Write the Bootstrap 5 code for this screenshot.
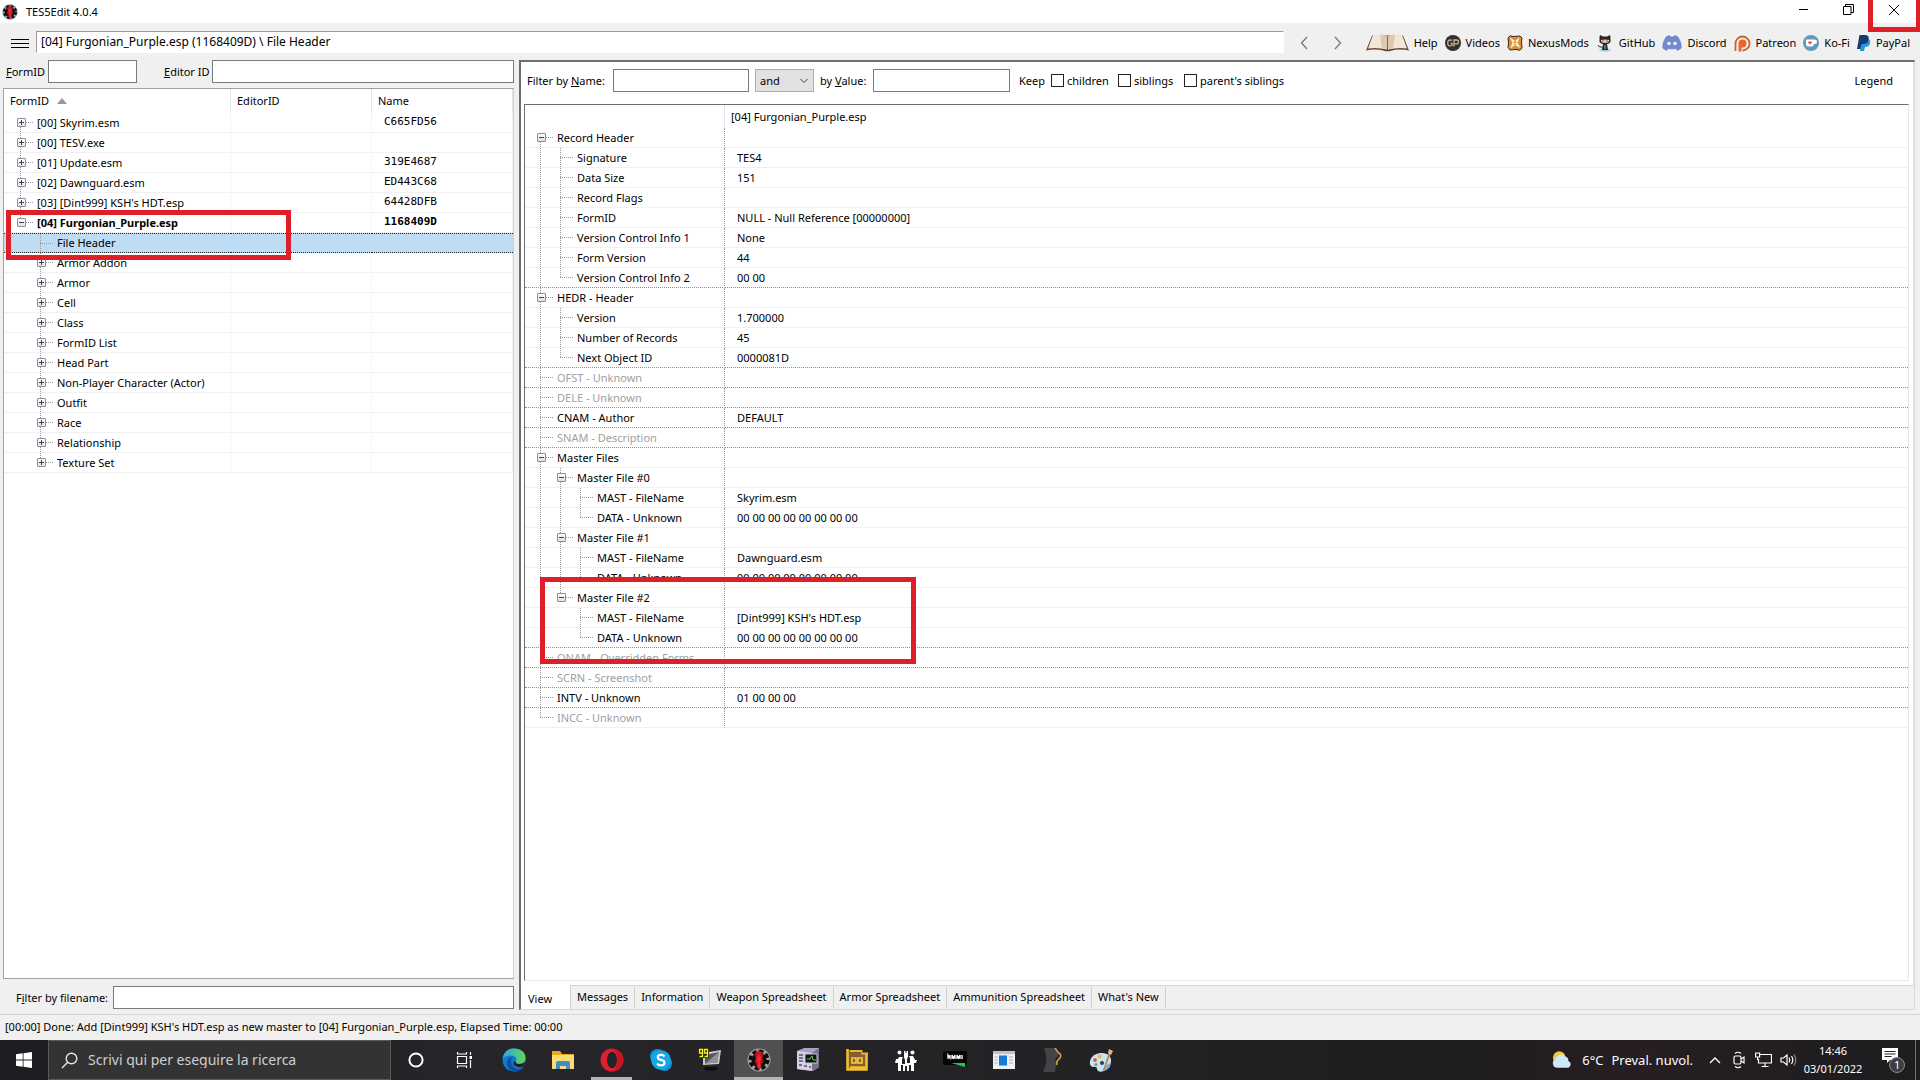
<!DOCTYPE html>
<html lang="en">
<head>
<meta charset="utf-8">
<meta name="viewport" content="width=device-width, initial-scale=1">
<title>TES5Edit 4.0.4</title>
<link href="https://cdn.jsdelivr.net/npm/bootstrap@5.3.0/dist/css/bootstrap.min.css" rel="stylesheet">
<style>
:root{--ui:"Noto Sans","Open Sans",sans-serif;--edge:#7a7a7a;--dots:#9a9a9a;--mark-red:#df1f28}
body{font-family:var(--ui);font-size:11px;line-height:16px;color:#000;background:#f0f0f0;overflow:hidden}
svg{display:block;flex:none}
label{white-space:nowrap}
button{font:inherit;color:inherit;background:none;border:0;padding:0}
a.tool-link{color:#000;text-decoration:none;gap:5px}
.title-bar{height:23px;background:#fff;padding-left:2px}
.win-btn{width:45px;height:18px;display:flex;align-items:center;justify-content:center}
.callout{position:absolute;border:5px solid var(--mark-red);pointer-events:none;z-index:5}
.tool-bar{height:37px;padding:0 10px 0 11px}
.menu-btn{padding:12px 0 8px}
.address{height:22px;background:#fff;border:1px solid #fff;border-top-color:#9a9a9a;border-left-color:#9a9a9a;padding:0 4px;font-size:12px;margin:0 3px 0 7px;min-width:0;color:#000}
.nav-arrow{width:34px;height:30px;display:flex;align-items:center;justify-content:center;padding-top:2px}
.tool-links{gap:7px;margin-left:11px;padding-top:3px}
.box-input{height:23px;border:1px solid var(--edge);background:#fff;border-radius:0;padding:0 4px;font:inherit;min-width:0}
.left-pane{width:519px;flex:none;padding:0 5px 5px 3px}
.tree-frame{background:#fff;border:1px solid #a0a0a0;border-right-color:#d0d0d0;margin:5px 0 7px;min-height:0}
.view-pane{border:2px solid #6d6d6d;border-right:1px solid #d9d9d9;border-bottom:1px solid #d9d9d9;margin:0 5px 4px 0;min-width:0}
.view-body{background:#fff;min-height:0;padding:7px 4px 4px 3px;border-bottom:1px solid #d4d4d4;border-right:1px solid #e4e4e4}
.grid-frame{border:1px solid #e8e8e8;border-left-color:#6d6d6d;border-top-color:#6d6d6d;margin-top:12px;min-height:0}
.mode-select{height:23px;width:59px;background:#e1e1e1 url("data:image/svg+xml,%3Csvg xmlns='http://www.w3.org/2000/svg' width='8' height='6'%3E%3Cpath d='M.5 1 4 4.500 7.500 1' fill='none' stroke='%23444'/%3E%3C/svg%3E") no-repeat right 5px center;border:1px solid #adadad;appearance:none;padding:0 4px;font:inherit;margin:0 6px;color:#000}
.tick{appearance:none;width:13px;height:13px;border:1px solid #222;background:#fff;margin:0 3px 0 0}
.tick:checked{background:#0067c0}

/* Tree tables */
.tree{table-layout:fixed;width:100%;border-collapse:separate;border-spacing:0}
.tree th{font-weight:400;padding:0;vertical-align:middle;border-right:1px solid #e2e6ea}
.tree td{height:20px;padding:0;border-bottom:1px solid #f1f1f1;white-space:nowrap;overflow:hidden;line-height:19px;vertical-align:top}
.tree td:first-child>div{display:flex;height:19px}
.files th{height:24px;padding-left:6px}
.files td:first-child>div{padding-left:13px}
.files td{border-right:1px solid #f4f4f4}
.files td:nth-child(3){padding-left:12px;font-family:"DejaVu Sans Mono",monospace;line-height:18px}
.files tr.chosen td{background:#bfdcf5;border-top:1px dotted #222;border-bottom:1px dotted #222;border-right:0;line-height:17px}
.files tr.chosen td>div,.files .chosen .gd{height:18px}
.record th{height:23px}
.record td:first-child>div{padding-left:12px}
.record th:last-child,.record td:last-child{border-right:0}
.record td:first-child{border-right:1px dotted var(--dots)}
.record td:last-child{padding-left:12px}
.record .part td{border-bottom:1px dotted #8e8e8e}
.record .unset{color:#a0a0a0}
/* Guide cells: gt = tee, ge = end of branch, gv = pass through, gf = first */
.gd{width:20px;height:20px;flex:none;position:relative;
 --h:repeating-linear-gradient(90deg,var(--dots) 0 1px,transparent 1px 2px) 3px 9px/13px 1px no-repeat;
 --v:repeating-linear-gradient(var(--dots) 0 1px,transparent 1px 2px)}
.gt{background:var(--h),var(--v) 3px 0/1px 20px no-repeat}
.ge{background:var(--h),var(--v) 3px 0/1px 10px no-repeat}
.gf{background:var(--h),var(--v) 3px 10px/1px 10px no-repeat}
.gv{background:var(--v) 3px 0/1px 20px no-repeat}
.pm{position:absolute;left:0;top:5px;width:9px;height:9px;border:1px solid #8b8f9a;border-radius:1px;
 background:linear-gradient(#33415e,#33415e) 1px 3px/5px 1px no-repeat,linear-gradient(#33415e,#33415e) 3px 1px/1px 5px no-repeat,linear-gradient(#fff,#e4e4ea)}
.pm.open{background:linear-gradient(#33415e,#33415e) 1px 3px/5px 1px no-repeat,linear-gradient(#fff,#e0e0e4)}

.page-tabs{height:23px}
.page-tabs button{height:21px;padding:0 6px 2px;border-right:1px solid #d0d0d0;align-self:flex-start;margin-top:1px}
.page-tabs button.on{background:#fff;height:24px;margin:-1px 0 0;width:50px;padding:3px 0 0 7px;text-align:left}
.state-line{height:26px;border-top:1px solid #d4d4d4;padding:0 5px 2px}

.task-bar{height:40px;background:linear-gradient(90deg,#1e1e22,#26262a 25%,#222225 60%,#1d1c1e 75%,#261e23 85%,#1d1d1f);color:#fff;font-size:14px}
.task-cell{width:49px;height:40px;display:flex;align-items:center;justify-content:center;flex:none}
.start-cell{width:48px}
.task-search{width:343px;height:40px;background:#333;border:1px solid #5a5a5a;gap:10px;padding-left:12px}
.task-search input{background:none;border:0;outline:0;color:#fff;width:250px;font:inherit;padding:0}
.task-search input::placeholder{color:#cfcfcf;opacity:1}
.live{background:#505053;box-shadow:inset 0 -3px #b4b4b6}
.running{position:relative}
.running::after{content:"";position:absolute;left:4px;right:4px;bottom:0;height:3px;background:#b4b4b6}
.tray-text{font-size:13px}
.clock{font-size:11px;line-height:18px;width:72px}
.tray-icon{margin-right:10px}
</style>
<script src="https://cdn.jsdelivr.net/npm/bootstrap@5.3.0/dist/js/bootstrap.bundle.min.js"></script>
</head>
<body class="d-flex flex-column vh-100">
<svg width="0" height="0" class="position-absolute">
 <symbol id="gear" viewBox="0 0 24 24"><circle cx="12" cy="12" r="11.500" fill="#98a1a2"/><circle cx="12" cy="12" r="8.800" fill="none" stroke="#0c0c0c" stroke-width="3.400" stroke-dasharray="4.200 2.710"/><circle cx="12" cy="12" r="7.600" fill="#101010"/><path d="M12 1l1.500 3L15 3l.7 4-.7 3 1.500 3-1.500 2-1 4-2 3.500L10 19l-1-4-1.500-2L9 10l-.7-3L9 3l1.500 1z" fill="#c2141f"/><path d="M7.500 6l2 4-1.500 5M16.500 6l-2 4 1.500 5" fill="none" stroke="#a30f18" stroke-width="1.300"/><path d="M12 5l1 4 1.500-2-.3 5-1.400 2 .7 4L12 21l-1.500-3 .7-4-1.400-2-.3-5L11 9z" fill="#f0283a"/></symbol>
</svg>

<header class="title-bar d-flex align-items-center position-relative flex-shrink-0">
 <svg width="16" height="16"><use href="#gear"/></svg>
 <span class="ms-1 ps-1 flex-grow-1">TES5Edit 4.0.4</span>
 <button class="win-btn mb-1" aria-label="Minimize"><svg width="11" height="11"><path d="M1 5.500h9" stroke="#000"/></svg></button>
 <button class="win-btn mb-1" aria-label="Restore"><svg width="11" height="11" fill="none" stroke="#000"><path d="M.5 2.500h7.500v8H.5zM2.500 2.500v-2h8v8h-2.500"/></svg></button>
 <button class="win-btn mb-1 me-1" aria-label="Close"><svg width="12" height="12"><path d="M1 1l10 10M11 1 1 11" stroke="#000"/></svg></button>
 <div class="callout" style="right:-1px;top:-6px;width:53px;height:38px"></div>
</header>

<nav class="tool-bar d-flex align-items-center flex-shrink-0">
 <button class="menu-btn" aria-label="Menu"><svg width="18" height="12"><path d="M0 1.500h18M0 5.500h18M0 9.500h18" stroke="#000"/></svg></button>
 <input class="address flex-grow-1" aria-label="Path" value="[04] Furgonian_Purple.esp (1168409D) \ File Header">
 <button class="nav-arrow" aria-label="Back"><svg width="8" height="14"><path d="M7 1 1.500 7 7 13" fill="none" stroke="#777" stroke-width="1.300"/></svg></button>
 <button class="nav-arrow" aria-label="Forward"><svg width="8" height="14"><path d="M1 1l5.500 6L1 13" fill="none" stroke="#777" stroke-width="1.300"/></svg></button>
 <div class="tool-links d-flex align-items-center">
 <a class="tool-link d-flex align-items-center" href="#"><svg width="43" height="18" viewBox="0 0 43 18"><path d="M6 1.500 0 16.500q10-2 18 .3 3.500 1 7 0 8-2.300 18-.3L37 1.500z" fill="#6b4632"/><path d="M7 1q10-1.500 14.500 1.500L21 15.500Q11 13 2 14.500zM36 1q-10-1.500-14.500 1.500l.5 13q10-2.500 19-1z" fill="#f3e6d6"/><path d="M14 .5q5 0 7.500 2L21 15.500l-5-1.500zM29 .5q-5 0-7.500 2l.5 13 5-1.500z" fill="#cba98b" opacity=".5"/><path d="M21.500 2.500v13" stroke="#8a6148"/></svg>Help</a>
 <a class="tool-link d-flex align-items-center" href="#"><svg width="16" height="16" viewBox="0 0 16 16"><circle cx="8" cy="8" r="8" fill="#33302c"/><path d="M7 5.300Q2.700 4 2.700 8t4.300 2.500V8.300H5.500M9 11.500V5h2.500q2 0 2 1.900t-2 1.900H9" fill="none" stroke="#c5b697" stroke-width="1.300"/></svg>Videos</a>
 <a class="tool-link d-flex align-items-center" href="#"><svg width="16" height="16" viewBox="0 0 16 16"><path d="M3 .8 6 1.500 13 1l2 2-.5 4 .5 6-2 2.200-4-.7-6 .5-2-2.500L1.500 8 1 3z" fill="#e08f2e" stroke="#3a2a18"/><path d="M3 2.500 8 6l4.500-3.500L10.500 8l3 5L8 10l-5 3.500L5.500 8z" fill="#fff6e4"/><path d="M6.500 6.500l3 3M9.500 6.500l-3 3" stroke="#d88a35" stroke-width="1.200"/></svg>NexusMods</a>
 <a class="tool-link d-flex align-items-center" href="#"><svg width="18" height="18" viewBox="0 0 18 18"><ellipse cx="9" cy="16" rx="6" ry="1.800" fill="#a9d3e8"/><path d="M4 1l3 1.500h4L14 1q.8 2 .4 3.500Q15.500 9.500 11 10l1 6H6l1-6Q2.500 9.500 3.600 4.500 3.200 3 4 1z" fill="#2c2424"/><path d="M5 6q4-1.200 8 0 .6 3-4 3T5 6z" fill="#eac7ae"/><path d="M7 6.500v1M11 6.500v1" stroke="#5b2a20" stroke-width="1.200"/><path d="M6.500 13Q3 14 2 11" fill="none" stroke="#2c2424"/><path d="M9 11v4" stroke="#8fc5de"/></svg>GitHub</a>
 <a class="tool-link d-flex align-items-center" href="#"><svg width="20" height="16" viewBox="0 0 20 16"><path d="M4 1.500Q6 .4 7.500.3l.7 1.200q1.800-.3 3.600 0l.7-1.200q1.500.1 3.500 1.200 4 6 3.700 11.500-2 2-4.700 2.700l-1.200-2q-3.800 1.200-7.600 0l-1.200 2Q2.300 15 .3 13 0 7.500 4 1.500z" fill="#7488d0"/><circle cx="7" cy="8.500" r="1.800" fill="#f0f0f0"/><circle cx="13" cy="8.500" r="1.800" fill="#f0f0f0"/></svg>Discord</a>
 <a class="tool-link d-flex align-items-center" href="#"><svg width="17" height="17" viewBox="0 0 17 17"><path d="M1.500 16V8.500a7 7 0 1 1 7 7" fill="none" stroke="#c9652c" stroke-width="1.800"/><path d="M4.500 16.500V8.500a4 4 0 1 1 4 4H7.500v4z" fill="#e7682c"/></svg>Patreon</a>
 <a class="tool-link d-flex align-items-center" href="#"><svg width="16" height="16" viewBox="0 0 16 16"><circle cx="8" cy="8" r="8" fill="#5d9db6"/><path d="M3 4.500h8.500q2.500 0 2.500 2.300T11 9q-.5 2.500-2.500 2.500h-3Q3 11.500 3 9z" fill="#fff"/><path d="M7 9.500 5 7.500q0-1.700 2-.7 2-1 2 .7z" fill="#e0474c"/></svg>Ko-Fi</a>
 <a class="tool-link d-flex align-items-center" href="#"><svg width="14" height="16" viewBox="0 0 14 16"><path d="M5 4h5q4 0 3 4.500Q12 12 8 12l-1 4H3z" fill="#1f9bd7"/><path d="M2.500 0H8q4.500 0 3.700 4.500Q10.800 9 6 9H4.500L3.500 14H0z" fill="#183a70"/></svg>PayPal</a>
 </div>
</nav>

<main class="d-flex flex-grow-1" style="min-height:0">
 <section class="left-pane d-flex flex-column position-relative">
  <div class="d-flex align-items-center flex-shrink-0">
   <label for="fid" style="width:45px;padding-left:3px"><u>F</u>ormID</label><input id="fid" class="box-input" style="width:89px">
   <label for="eid" style="width:75px;padding-left:27px"><u>E</u>ditor ID</label><input id="eid" class="box-input flex-grow-1">
  </div>
  <div class="tree-frame flex-grow-1">
   <table class="tree files">
    <colgroup><col style="width:227px"><col style="width:141px"><col></colgroup>
    <thead><tr><th><span class="d-flex align-items-center gap-2">FormID <svg width="10" height="6"><path d="M0 6 5 0l5 6z" fill="#999"/></svg></span></th><th>EditorID</th><th>Name</th></tr></thead>
    <tbody>
    <tr><td><div><span class="gd gf"><button class="pm" aria-label="Expand"></button></span>[00] Skyrim.esm</div></td><td></td><td>C665FD56</td></tr>
    <tr><td><div><span class="gd gt"><button class="pm" aria-label="Expand"></button></span>[00] TESV.exe</div></td><td></td><td></td></tr>
    <tr><td><div><span class="gd gt"><button class="pm" aria-label="Expand"></button></span>[01] Update.esm</div></td><td></td><td>319E4687</td></tr>
    <tr><td><div><span class="gd gt"><button class="pm" aria-label="Expand"></button></span>[02] Dawnguard.esm</div></td><td></td><td>ED443C68</td></tr>
    <tr><td><div><span class="gd gt"><button class="pm" aria-label="Expand"></button></span>[03] [Dint999] KSH's HDT.esp</div></td><td></td><td>64428DFB</td></tr>
    <tr class="fw-bold"><td><div><span class="gd ge"><button class="pm open" aria-label="Collapse"></button></span>[04] Furgonian_Purple.esp</div></td><td></td><td>1168409D</td></tr>
    <tr class="chosen"><td><div><span class="gd"></span><span class="gd gt"></span>File Header</div></td><td></td><td></td></tr>
    <tr><td><div><span class="gd"></span><span class="gd gt"><button class="pm" aria-label="Expand"></button></span>Armor Addon</div></td><td></td><td></td></tr>
    <tr><td><div><span class="gd"></span><span class="gd gt"><button class="pm" aria-label="Expand"></button></span>Armor</div></td><td></td><td></td></tr>
    <tr><td><div><span class="gd"></span><span class="gd gt"><button class="pm" aria-label="Expand"></button></span>Cell</div></td><td></td><td></td></tr>
    <tr><td><div><span class="gd"></span><span class="gd gt"><button class="pm" aria-label="Expand"></button></span>Class</div></td><td></td><td></td></tr>
    <tr><td><div><span class="gd"></span><span class="gd gt"><button class="pm" aria-label="Expand"></button></span>FormID List</div></td><td></td><td></td></tr>
    <tr><td><div><span class="gd"></span><span class="gd gt"><button class="pm" aria-label="Expand"></button></span>Head Part</div></td><td></td><td></td></tr>
    <tr><td><div><span class="gd"></span><span class="gd gt"><button class="pm" aria-label="Expand"></button></span>Non-Player Character (Actor)</div></td><td></td><td></td></tr>
    <tr><td><div><span class="gd"></span><span class="gd gt"><button class="pm" aria-label="Expand"></button></span>Outfit</div></td><td></td><td></td></tr>
    <tr><td><div><span class="gd"></span><span class="gd gt"><button class="pm" aria-label="Expand"></button></span>Race</div></td><td></td><td></td></tr>
    <tr><td><div><span class="gd"></span><span class="gd gt"><button class="pm" aria-label="Expand"></button></span>Relationship</div></td><td></td><td></td></tr>
    <tr><td><div><span class="gd"></span><span class="gd ge"><button class="pm" aria-label="Expand"></button></span>Texture Set</div></td><td></td><td></td></tr>
    </tbody>
   </table>
  </div>
  <div class="d-flex align-items-center flex-shrink-0">
   <label for="ffn" style="width:110px;padding-left:13px">F<u>i</u>lter by filename:</label><input id="ffn" class="box-input flex-grow-1">
  </div>
  <div class="callout" style="left:6px;top:150px;width:285px;height:50px"></div>
 </section>

 <section class="view-pane d-flex flex-column flex-grow-1">
  <div class="view-body d-flex flex-column flex-grow-1">
   <div class="d-flex align-items-center flex-shrink-0">
    <label for="fn" style="width:89px;padding-left:3px">Filter by <u>N</u>ame:</label><input id="fn" class="box-input" style="width:136px">
    <select class="mode-select" aria-label="Operator"><option>and</option><option>or</option></select>
    <label for="fv" style="width:53px">by <u>V</u>alue:</label><input id="fv" class="box-input" style="width:137px">
    <span style="width:41px;padding-left:9px">Keep</span>
    <input type="checkbox" class="tick" id="k1"><label for="k1" style="width:51px">children</label>
    <input type="checkbox" class="tick" id="k2"><label for="k2" style="width:50px">siblings</label>
    <input type="checkbox" class="tick" id="k3"><label for="k3">parent's siblings</label>
    <button class="ms-auto me-3">Legend</button>
   </div>
   <div class="grid-frame flex-grow-1 position-relative">
    <table class="tree record">
     <colgroup><col style="width:200px"><col></colgroup>
     <thead><tr><th></th><th style="padding-left:6px">[04] Furgonian_Purple.esp</th></tr></thead>
     <tbody>
     <tr><td><div><span class="gd gf"><button class="pm open" aria-label="Collapse"></button></span>Record Header</div></td><td></td></tr>
     <tr><td><div><span class="gd gv"></span><span class="gd gt"></span>Signature</div></td><td>TES4</td></tr>
     <tr><td><div><span class="gd gv"></span><span class="gd gt"></span>Data Size</div></td><td>151</td></tr>
     <tr><td><div><span class="gd gv"></span><span class="gd gt"></span>Record Flags</div></td><td></td></tr>
     <tr><td><div><span class="gd gv"></span><span class="gd gt"></span>FormID</div></td><td>NULL - Null Reference [00000000]</td></tr>
     <tr><td><div><span class="gd gv"></span><span class="gd gt"></span>Version Control Info 1</div></td><td>None</td></tr>
     <tr><td><div><span class="gd gv"></span><span class="gd gt"></span>Form Version</div></td><td>44</td></tr>
     <tr class="part"><td><div><span class="gd gv"></span><span class="gd ge"></span>Version Control Info 2</div></td><td>00 00</td></tr>
     <tr><td><div><span class="gd gt"><button class="pm open" aria-label="Collapse"></button></span>HEDR - Header</div></td><td></td></tr>
     <tr><td><div><span class="gd gv"></span><span class="gd gt"></span>Version</div></td><td>1.700000</td></tr>
     <tr><td><div><span class="gd gv"></span><span class="gd gt"></span>Number of Records</div></td><td>45</td></tr>
     <tr class="part"><td><div><span class="gd gv"></span><span class="gd ge"></span>Next Object ID</div></td><td>0000081D</td></tr>
     <tr class="part unset"><td><div><span class="gd gt"></span>OFST - Unknown</div></td><td></td></tr>
     <tr class="part unset"><td><div><span class="gd gt"></span>DELE - Unknown</div></td><td></td></tr>
     <tr class="part"><td><div><span class="gd gt"></span>CNAM - Author</div></td><td>DEFAULT</td></tr>
     <tr class="part unset"><td><div><span class="gd gt"></span>SNAM - Description</div></td><td></td></tr>
     <tr><td><div><span class="gd gt"><button class="pm open" aria-label="Collapse"></button></span>Master Files</div></td><td></td></tr>
     <tr><td><div><span class="gd gv"></span><span class="gd gt"><button class="pm open" aria-label="Collapse"></button></span>Master File #0</div></td><td></td></tr>
     <tr><td><div><span class="gd gv"></span><span class="gd gv"></span><span class="gd gt"></span>MAST - FileName</div></td><td>Skyrim.esm</td></tr>
     <tr><td><div><span class="gd gv"></span><span class="gd gv"></span><span class="gd ge"></span>DATA - Unknown</div></td><td>00 00 00 00 00 00 00 00</td></tr>
     <tr><td><div><span class="gd gv"></span><span class="gd gt"><button class="pm open" aria-label="Collapse"></button></span>Master File #1</div></td><td></td></tr>
     <tr><td><div><span class="gd gv"></span><span class="gd gv"></span><span class="gd gt"></span>MAST - FileName</div></td><td>Dawnguard.esm</td></tr>
     <tr><td><div><span class="gd gv"></span><span class="gd gv"></span><span class="gd ge"></span>DATA - Unknown</div></td><td>00 00 00 00 00 00 00 00</td></tr>
     <tr><td><div><span class="gd gv"></span><span class="gd ge"><button class="pm open" aria-label="Collapse"></button></span>Master File #2</div></td><td></td></tr>
     <tr><td><div><span class="gd gv"></span><span class="gd"></span><span class="gd gt"></span>MAST - FileName</div></td><td>[Dint999] KSH's HDT.esp</td></tr>
     <tr class="part"><td><div><span class="gd gv"></span><span class="gd"></span><span class="gd ge"></span>DATA - Unknown</div></td><td>00 00 00 00 00 00 00 00</td></tr>
     <tr class="part unset"><td><div><span class="gd gt"></span>ONAM - Overridden Forms</div></td><td></td></tr>
     <tr class="part unset"><td><div><span class="gd gt"></span>SCRN - Screenshot</div></td><td></td></tr>
     <tr class="part"><td><div><span class="gd gt"></span>INTV - Unknown</div></td><td>01 00 00 00</td></tr>
     <tr class="unset"><td><div><span class="gd ge"></span>INCC - Unknown</div></td><td></td></tr>
     </tbody>
    </table>
    <div class="callout" style="left:15px;top:472px;width:376px;height:87px"></div>
   </div>
  </div>
  <div class="page-tabs d-flex flex-shrink-0">
   <button class="on">View</button><button>Messages</button><button>Information</button><button>Weapon Spreadsheet</button><button>Armor Spreadsheet</button><button>Ammunition Spreadsheet</button><button>What's New</button>
  </div>
 </section>
</main>

<footer class="state-line d-flex align-items-center flex-shrink-0">[00:00] Done: Add [Dint999] KSH's HDT.esp as new master to [04] Furgonian_Purple.esp, Elapsed Time: 00:00</footer>

<div class="task-bar d-flex align-items-center flex-shrink-0">
 <button class="task-cell start-cell" aria-label="Start"><svg width="16" height="16" fill="#fff"><path d="M0 2.300 6.700 1.300V7.600H0zM7.500 1.200 16 0v7.600H7.500zM0 8.400h6.700v6.300L0 13.700zM7.500 8.400H16V16l-8.500-1.200z"/></svg></button>
 <label class="task-search d-flex align-items-center"><svg width="17" height="17" fill="none" stroke="#e6e6e6" stroke-width="1.400"><circle cx="10.500" cy="6.500" r="5.300"/><path d="M6.700 10.300 1 16"/></svg><input placeholder="Scrivi qui per eseguire la ricerca"></label>
 <button class="task-cell" aria-label="Cortana"><svg width="18" height="18"><circle cx="9" cy="9" r="6.600" fill="none" stroke="#fff" stroke-width="2"/></svg></button>
 <button class="task-cell" aria-label="Task view"><svg width="18" height="16" fill="none" stroke="#fff" stroke-width="1.200"><path d="M1.500 4.500h9v7h-9zM1.500 0v2h9V0M1.500 16v-2h9v2M14.500 0v3M14.500 8v8"/><path d="M13.500 4h2.500v3h-2.500z" fill="#fff" stroke="none"/></svg></button>
 <button class="task-cell" aria-label="Edge"><svg width="24" height="24" viewBox="0 0 24 24"><defs><linearGradient id="eg" x1="0" x2="1"><stop offset="0" stop-color="#2ba7e0"/><stop offset="1" stop-color="#5fd65a"/></linearGradient></defs><circle cx="12" cy="12" r="11.500" fill="#1379cf"/><path d="M.6 11Q2 .5 12 .5 23.500 1 23.500 10.500 23 16 17 16q-4 0-3.500-2.500Q15 12 14 9.500 12 7 8 7.500 2 8 .6 11z" fill="url(#eg)"/><path d="M9 13q0 6 6 8 4 .5 7-3-2 5.500-9 5.500Q5 22 5 15q0-5 5-6-1 1.500-1 4z" fill="#0b4f9e"/><path d="M14 13.500q-.8 2.500 3 2.500 3.500 0 6-2.500l-1.500 5q-5 2-9-1-2-2-.500-4z" fill="#232327"/></svg></button>
 <button class="task-cell" aria-label="Explorer"><svg width="22" height="20" viewBox="0 0 22 20"><path d="M0 1h8l2 3h12v15H0z" fill="#e9a820"/><path d="M0 5h22v14H0z" fill="#fbdc72"/><path d="M4 19v-6q0-2 2-2h10q2 0 2 2v6h-4v-3H8v3z" fill="#3f8dc9"/></svg></button>
 <button class="task-cell running" aria-label="Opera"><svg width="24" height="24" viewBox="0 0 24 24"><path fill-rule="evenodd" d="M12 .5a11.500 11.500 0 1 0 0 23 11.500 11.500 0 1 0 0-23zm0 3.500c3.200 0 4.700 4 4.700 8s-1.500 8-4.700 8-4.700-4-4.700-8 1.500-8 4.700-8z" fill="#e01f30"/><path fill-rule="evenodd" d="M12 .5a11.500 11.500 0 0 1 0 23q5-2 5-11.500T12 .5z" fill="#a90e1e" opacity=".5"/><ellipse cx="12" cy="12" rx="4.700" ry="8" fill="#242428"/></svg></button>
 <button class="task-cell" aria-label="Skype"><svg width="24" height="24" viewBox="0 0 24 24"><circle cx="8.500" cy="8.500" r="7.500" fill="#0f93d8"/><circle cx="15.500" cy="15.500" r="7.500" fill="#0f93d8"/><circle cx="12" cy="12" r="9.800" fill="#1aa5e6"/><path d="M15.500 8.500Q14.500 6.800 12 6.800q-3.200 0-3.200 2.500 0 2 3.200 2.600 3.500.6 3.500 2.900 0 2.600-3.500 2.600-2.800 0-3.800-2" fill="none" stroke="#fff" stroke-width="2.200"/></svg></button>
 <button class="task-cell" aria-label="Monitor"><svg width="24" height="24" viewBox="0 0 24 24"><path d="M5 5 23 2l-2 14-16 1z" fill="#c9cacc"/><path d="M7 7l14-3-1.700 10.500L7 15.500z" fill="#54575b"/><path d="M7 15.500 21 4l-1.700 10.500z" fill="#8f9397"/><path d="M10 17h5l1 3H9z" fill="#333"/><ellipse cx="13" cy="20.500" rx="7" ry="2" fill="#0e0e0e"/><path d="M0 0h11v10H0z" fill="#222206"/><path d="M5 5H1.500V1.500H4.500v7H1.500M10 5H6.500V1.500H9.500v7H6.500" fill="none" stroke="#f5ef2c" stroke-width="1.300"/></svg></button>
 <button class="task-cell live" aria-label="TES5Edit"><svg width="24" height="24"><use href="#gear"/></svg></button>
 <button class="task-cell" aria-label="Server"><svg width="24" height="24" viewBox="0 0 24 24"><path d="M1 3 8 0h15v19l-6 4-16-2z" fill="#a9a4c4"/><path d="M1 3l15 2v18L1 21z" fill="#d5d1e4"/><path d="M16 5l7-5v19l-7 4z" fill="#77718f"/><path d="M9 6h12v9H9z" fill="#10140f" stroke="#c8c6d4"/><path d="M11 11h3l2-3 1 4h3" fill="none" stroke="#5ed34e"/><path d="M3 7h4M3 10h4M3 13h4M3 17h3M8 18h3M13 19h2" stroke="#57516e" stroke-width="1.500"/></svg></button>
 <button class="task-cell" aria-label="LOOT"><svg width="22" height="22" viewBox="0 0 22 22"><path d="M1 1h16v4h4v16H1z" fill="#8a5a32"/><path d="M1.500 0v20.500H20.500V4M4 18.500h15" fill="none" stroke="#efc02e" stroke-width="2.600"/><path d="M15 4.500h7M4 2h12" stroke="#e7b92f" stroke-width="1.800"/><path d="M6 9h4v5H6zM12 9h4v5h-4z" fill="none" stroke="#f3cf4a" stroke-width="1.600"/></svg></button>
 <button class="task-cell" aria-label="Mod manager"><svg width="22" height="22" viewBox="0 0 22 22" fill="#fff"><path d="M9 2h1.500v2h1V2H13v6l-1 2v4h3V9l-1-2h4l1 2 1 2h2l-1 3h-2v8h-3v-6h-2v6h-2v-5h-2v5H8v-6H6v6H3v-8H0l1-4h2l1-2h4l-1 2v5h3v-4L9 8z"/><circle cx="4.500" cy="3.500" r="2"/><circle cx="17.500" cy="3.500" r="2"/></svg></button>
 <button class="task-cell" aria-label="NMM"><svg width="24" height="20" viewBox="0 0 24 20"><rect y="1" width="24" height="14" rx="2" fill="#050505"/><path d="M5 9V5l2 3V5M9 9V5l1.500 3L12 5v4M14 9V5l1.500 3L17 5v4M19 9V5" stroke="#fff" stroke-width="1.300" fill="none"/><path d="M8 13h14v4z" fill="#20c64a"/></svg></button>
 <button class="task-cell" aria-label="Window"><svg width="22" height="18" viewBox="0 0 22 18"><path d="M0 0h22v18H0z" fill="#eef0f2"/><path d="M0 0h22v3H0z" fill="#b9c4cc"/><path d="M6 4.500h8v10H6z" fill="#1579d6"/><path d="M1.500 6h3M1.500 9h3M1.500 12h3M16 6h4M16 9h4M16 12h4" stroke="#a9b0b8"/></svg></button>
 <button class="task-cell" aria-label="BodySlide"><svg width="20" height="26" viewBox="0 0 20 26"><path d="M1 1h12q5 4 1 9-3 3-1 7l-1 8H0q6-11 1-24z" fill="#444447"/><path d="M12 1q2 4 5.500 6.500Q18.500 10 15 13q-2 2-1 5" fill="none" stroke="#d3a244" stroke-width="1.600"/></svg></button>
 <button class="task-cell" aria-label="Paint"><svg width="25" height="25" viewBox="0 0 25 25"><path d="M11 5q9-1 11 6 1 9-7 12-6 2-7-2 0-3-4-2-4-1-3-6 2-7 10-8z" fill="#c9e4f3"/><path d="M15 23q6-2 7-9l-4 3-5 5z" fill="#6fb0dc"/><circle cx="6" cy="12" r="1.900" fill="#e05a3a"/><circle cx="10.500" cy="8.500" r="1.900" fill="#f0b73d"/><circle cx="7" cy="16.500" r="1.500" fill="#58b04c"/><circle cx="13" cy="15" r="2" fill="#2a3d5c"/><path d="M20 4 14 22l1.500.5L22 5z" fill="#c48a4d"/><path d="M19 5l1-4 4 2-2 4z" fill="#e2b98c"/></svg></button>
 <div class="d-flex align-items-center ms-auto">
  <svg width="20" height="20" viewBox="0 0 22 20" class="tray-icon"><circle cx="8" cy="7.500" r="7" fill="#f6c445"/><path d="M5 18.500a5 5 0 0 1-1-9.500 6 6 0 0 1 10.500-3 5 5 0 0 1 3.500 5 4 4 0 0 1 0 7.500z" fill="#cfe8f8"/></svg>
  <span class="tray-text">6°C</span><span class="tray-text ms-2">Preval. nuvol.</span>
  <svg width="12" height="8" style="margin:0 12px 0 16px"><path d="M1 7l5-5 5 5" fill="none" stroke="#fff" stroke-width="1.300"/></svg>
  <svg width="12" height="18" class="tray-icon" fill="none" stroke="#fff" stroke-width="1.200"><rect x="1" y="5" width="7" height="8" rx="1.500"/><path d="M8 8l3-2v6l-3-2M2 2.500q3-2.500 6 0M2 15.500q3 2.500 6 0"/></svg>
  <svg width="17" height="16" class="me-2" fill="none" stroke="#fff" stroke-width="1.200"><path d="M5 2.500h11.500v8.500H3.500V7M10 11v3.500M6.500 14.500h7M.6 1h4v4h-4zM2.600 5v3"/></svg>
  <svg width="17" height="16" fill="none" stroke="#fff" stroke-width="1.200"><path d="M1 6v4h2.500L7 13V3L3.500 6zM9 5.500q1.500 2.500 0 5M11.500 4q2.500 4 0 8"/><path d="M14 2.500q3.500 5.500 0 11" stroke="#888"/></svg>
  <div class="clock text-center">14:46<br>03/01/2022</div>
  <svg width="26" height="30" viewBox="0 0 26 30" style="margin-left:12px"><path d="M1 3h16v12H9l-3 3v-3H1z" fill="#fff"/><path d="M3.500 6.500h11M3.500 9h11M3.500 11.500h7" stroke="#222"/><circle cx="16" cy="20" r="7.500" fill="#3f3f42" stroke="#8a8a8a"/><text x="13" y="24" font-size="11" font-family="Noto Sans" fill="#fff">1</text></svg>
  <div class="border-start border-secondary ms-2" style="width:5px;height:40px"></div>
 </div>
</div>
</body>
</html>
